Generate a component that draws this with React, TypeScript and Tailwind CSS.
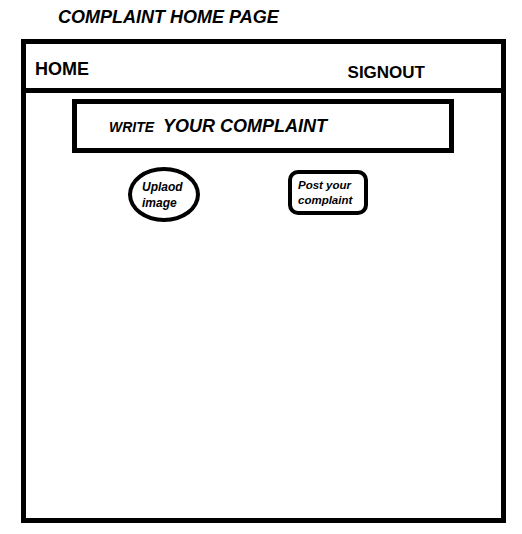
const font = "font-['Liberation_Sans',Arial,sans-serif]";

const App = () => {
  return (
    <div className={`w-[522px] h-[534px] bg-white text-black ${font}`}>
      <h1 className="pt-2 pl-[58px] text-[18px] leading-none font-bold italic">
        COMPLAINT HOME PAGE
      </h1>

      <div className="mt-[13px] ml-[21px] w-[485px] h-[484px] border-[5px] border-black">
        {/* Nav */}
        <nav className="h-[49px] border-b-[5px] border-black flex items-start justify-between pl-[9px] pr-[76px] pt-4">
          <span className="text-[18px] leading-none font-bold">HOME</span>
          <span className="mt-1 text-[17px] leading-none font-bold">SIGNOUT</span>
        </nav>

        {/* Complaint input */}
        <div className="mt-[6px] ml-[46px] w-[382px] h-[54px] border-[5px] border-black flex items-baseline pl-[32px] pt-[13px]">
          <span className="text-[14px] leading-none font-bold italic">WRITE</span>
          <span className="ml-[9px] text-[18px] leading-none font-bold italic">
            YOUR COMPLAINT
          </span>
        </div>

        {/* Actions */}
        <div className="mt-[14px] flex items-start">
          <button className="ml-[102px] w-[72px] h-[55px] rounded-[50%] border-4 border-black flex flex-col items-start justify-center pl-[10px] text-[12px] leading-[16px] font-bold italic">
            <span>Uplaod</span>
            <span>image</span>
          </button>
          <button className="mt-[3px] ml-[88px] w-[80px] h-[45px] rounded-[10px] border-4 border-black flex flex-col items-start justify-center pl-[6px] text-[11.5px] leading-[15px] font-bold italic">
            <span>Post your</span>
            <span>complaint</span>
          </button>
        </div>
      </div>
    </div>
  );
};

export default App;
